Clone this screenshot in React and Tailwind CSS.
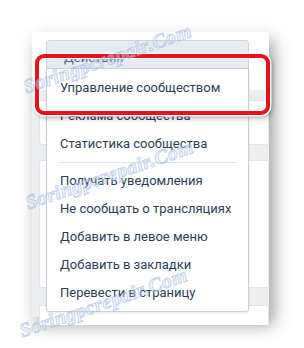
import React from 'react';

const TOP_ITEMS = ['Управление сообществом', 'Реклама сообщества', 'Статистика сообщества'];
const BOTTOM_ITEMS = [
  'Получать уведомления',
  'Не сообщать о трансляциях',
  'Добавить в левое меню',
  'Добавить в закладки',
  'Перевести в страницу',
];

export default function App() {
  return (
    <div className="relative w-[304px] h-[348px] bg-white overflow-hidden pt-[32px] pl-[32px] font-['Roboto','Liberation_Sans',sans-serif]">
      <div className="relative w-[237px] h-[285px] bg-[#edeef0] shadow-[5px_8px_16px_rgba(0,0,0,0.38)] flex flex-col">
        <div className="h-[58px] shrink-0 bg-white" />
        <div className="flex flex-col gap-[15px] pl-[7px] pt-[10px]">
          <div className="h-[45px] bg-white rounded-[3px] border border-[#e3e4e8]" />
          <div className="h-[128px] bg-white rounded-[3px] border border-[#e3e4e8]" />
          <div className="h-[20px] mt-[2px] bg-white rounded-t-[3px] border border-b-0 border-[#e3e4e8]" />
        </div>

        {/* dropdown: button + menu */}
        <div className="absolute left-[14px] top-[8px] w-[203px] flex flex-col">
          <div className="h-[29px] bg-[#e5ebf1] border border-[#cbd5df] rounded-t-[3px] pl-[17px] pt-[7px] text-[13px] text-[#55677d]">
            Действия
          </div>
          <div className="-mt-px flex flex-col bg-white border border-[#c5d0db] rounded-b-[3px] shadow-[0_1px_3px_rgba(0,0,0,0.1)] pt-[5px] pb-[4px]">
            {TOP_ITEMS.map(t => (
              <MenuItem key={t} label={t} />
            ))}
            <div className="mx-[11px] my-[4px] h-px bg-[#dfe6ed]" />
            {BOTTOM_ITEMS.map(t => (
              <MenuItem key={t} label={t} />
            ))}
          </div>
        </div>
      </div>

      {/* red highlight frame */}
      <div className="absolute left-[35px] top-[54px] w-[235px] h-[61px] rounded-[9px] border-[4px] border-[#e8121c] shadow-[0_0_0_1.5px_#ffffff,inset_0_0_0_1px_#ffffff,2px_3px_5px_rgba(0,0,0,0.35)]" />

      {/* watermarks */}
      <Watermark className="left-[24px] top-[72px]" />
      <Watermark className="left-[26px] top-[188px]" />
      <Watermark className="left-[20px] top-[316px]" />
    </div>
  );
}

function MenuItem({ label }) {
  return (
    <div className="h-[28px] flex items-center pl-[13px] text-[13px] text-[#2b3e57] whitespace-nowrap">
      {label}
    </div>
  );
}

function Watermark({ className }) {
  return (
    <div
      className={`absolute ${className} -rotate-[19deg] origin-left whitespace-nowrap text-[20px] italic font-bold tracking-[0.5px] font-['Liberation_Serif',serif] text-[rgba(225,233,248,0.35)] [-webkit-text-stroke:1px_rgba(160,184,224,0.6)] pointer-events-none`}
    >
      Soringpcrepair.Com
    </div>
  );
}
